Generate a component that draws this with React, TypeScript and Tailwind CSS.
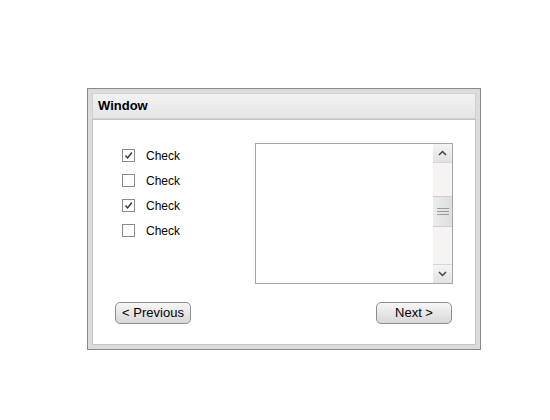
const items = [
  { label: "Check", checked: true },
  { label: "Check", checked: false },
  { label: "Check", checked: true },
  { label: "Check", checked: false },
];

function CheckBox({ checked }: { checked: boolean }) {
  return (
    <span className="flex h-[13px] w-[13px] items-center justify-center border border-[#8a8a8a] bg-white">
      {checked && (
        <svg width="9" height="9" viewBox="0 0 9 9">
          <path d="M1.5 4.5 L3.6 7 L7.8 1.5" fill="none" stroke="#333" strokeWidth="1.4" />
        </svg>
      )}
    </span>
  );
}

function Chevron({ up }: { up: boolean }) {
  return (
    <svg width="9" height="6" viewBox="0 0 9 6">
      <path
        d={up ? "M1 5 L4.5 1.5 L8 5" : "M1 1 L4.5 4.5 L8 1"}
        fill="none"
        stroke="#444"
        strokeWidth="1.5"
      />
    </svg>
  );
}

function ListBox() {
  return (
    <div className="flex h-[141px] w-[198px] border border-[#a6a6a6] bg-white">
      <div className="flex-1" />
      <div className="flex w-[19px] flex-col bg-[#f7f3f3]">
        <div className="flex h-[19px] items-center justify-center border-b border-[#d6d6d6] bg-gradient-to-b from-[#f4f4f4] to-[#e2e2e2]">
          <Chevron up />
        </div>
        <div className="h-[33px]" />
        <div className="flex h-[31px] flex-col items-center justify-center gap-[2px] border-y border-[#cfcfcf] bg-gradient-to-r from-[#ececec] to-[#dedede]">
          <span className="h-px w-[12px] bg-[#999]" />
          <span className="h-px w-[12px] bg-[#999]" />
          <span className="h-px w-[12px] bg-[#999]" />
        </div>
        <div className="flex-1" />
        <div className="flex h-[19px] items-center justify-center border-t border-[#d6d6d6] bg-gradient-to-b from-[#f4f4f4] to-[#e2e2e2]">
          <Chevron up={false} />
        </div>
      </div>
    </div>
  );
}

function Button({ children }: { children: string }) {
  return (
    <button className="flex h-[22px] w-[76px] items-center justify-center rounded-[5px] border border-[#8e8e8e] bg-gradient-to-b from-[#f6f6f6] to-[#d8d8d8] text-[13px] text-black">
      {children}
    </button>
  );
}

export default function App() {
  return (
    <div
      className="min-h-[420px] bg-white pl-[87px] pt-[88px]"
      style={{ fontFamily: "'Liberation Sans', Arial, sans-serif" }}
    >
      <div className="flex h-[262px] w-[394px] flex-col border border-[#8a8a8a] bg-[#dcdcdc] p-[4px]">
        <div className="flex h-[26px] items-center border border-[#d0d0d0] bg-gradient-to-b from-[#f2f2f2] to-[#e6e6e6] pl-[5px] text-[13px] font-bold text-black">
          Window
        </div>
        <div className="flex flex-1 flex-col border border-[#c4c4c4] bg-white pl-[22px] pr-[22px] pt-[23px]">
          <div className="flex justify-between">
            <div className="flex flex-col pl-[7px]">
              {items.map((item, i) => (
                <div key={i} className="flex h-[25px] items-center gap-[11px] text-[12px] text-black">
                  <CheckBox checked={item.checked} />
                  <span>{item.label}</span>
                </div>
              ))}
            </div>
            <ListBox />
          </div>
          <div className="mt-[18px] flex justify-between pr-px">
            <Button>&lt; Previous</Button>
            <Button>Next &gt;</Button>
          </div>
        </div>
      </div>
    </div>
  );
}
